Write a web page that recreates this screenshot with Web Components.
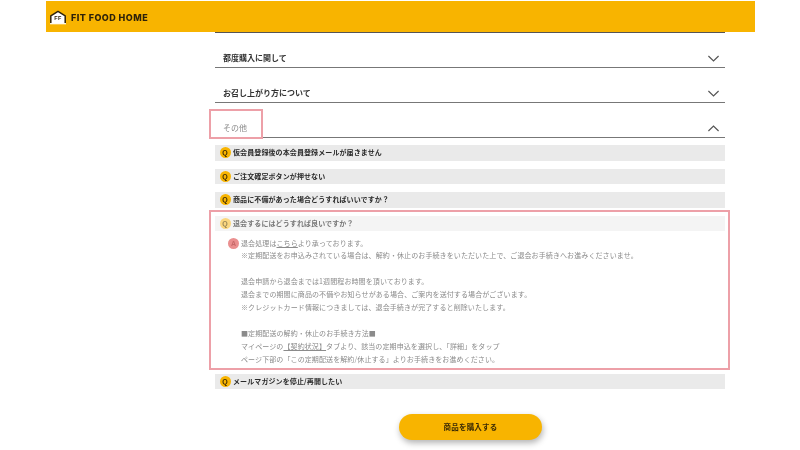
<!DOCTYPE html>
<html lang="ja"><head><meta charset="utf-8"><title>FAQ</title>
<style>
html,body{margin:0;padding:0;background:#fff}
body{width:800px;height:450px;overflow:hidden;font-family:"Noto Sans CJK JP","Noto Sans",sans-serif;color:#333;filter:blur(.3px)}
</style></head><body>
<ff-header></ff-header>
<ff-main>
  <ff-section title-text="都度購入に関して"></ff-section>
  <ff-section title-text="お召し上がり方について"></ff-section>
  <ff-section title-text="その他" open marked>
    <ff-q>仮会員登録後の本会員登録メールが届きません</ff-q>
    <ff-q>ご注文確定ボタンが押せない</ff-q>
    <ff-q>商品に不備があった場合どうすればいいですか？</ff-q>
    <ff-answer q="退会するにはどうすれば良いですか？">
      <p>退会処理は<u>こちら</u>より承っております。<br>※定期配送をお申込みされている場合は、解約・休止のお手続きをいただいた上で、ご退会お手続きへお進みくださいませ。</p>
      <p>退会申請から退会までは1週間程お時間を頂いております。<br>退会までの期間に商品の不備やお知らせがある場合、ご案内を送付する場合がございます。<br>※クレジットカード情報につきましては、退会手続きが完了すると削除いたします。</p>
      <p>■定期配送の解約・休止のお手続き方法■<br>マイページの<u>【契約状況】</u>タブより、該当の定期申込を選択し、「詳細」をタップ<br>ページ下部の「この定期配送を解約/休止する」よりお手続きをお進めください。</p>
    </ff-answer>
    <ff-q>メールマガジンを停止/再開したい</ff-q>
  </ff-section>
  <ff-button>商品を購入する</ff-button>
</ff-main>
<script>
function def(name,html,init){customElements.define(name,class extends HTMLElement{
  constructor(){super();const r=this.attachShadow({mode:"open"});r.innerHTML=html;if(init)init(this,r);}
  connectedCallback(){if(this._c)this._c();}
});}
def("ff-header",`<style>
:host{display:flex;align-items:center;gap:4px;box-sizing:border-box;width:709px;height:31px;margin:1px 0 0 46px;padding:2px 0 0 3px;background:#f8b400;color:#2e2209;font:800 9px "Inter","Liberation Sans",sans-serif;letter-spacing:.45px}
svg{display:block}
</style>
<svg width="18" height="15" viewBox="0 0 18 15"><path d="M1.8 13.4V5.8L9 1.4l7.2 4.4v7.6" fill="#fff" stroke="#2e2209" stroke-width="1.5" stroke-linejoin="round"/><path d="M1 13.7h16" stroke="#fff" stroke-width="1.2"/><text x="9" y="10.4" text-anchor="middle" font-family="Liberation Sans" font-weight="700" font-size="5.5" fill="#2e2209">FF</text></svg>
<span>FIT FOOD HOME</span>`);
def("ff-main",`<style>
:host{display:block;width:510px;margin-left:215px;border-top:1px solid #555}
</style><slot></slot>`);
const chev=d=>`<svg width="11" height="7" viewBox="0 0 11 7"><path d="${d}" fill="none" stroke="#555" stroke-width="1.2"/></svg>`;
def("ff-section",`<style>
:host{display:block;position:relative}
.h{display:flex;align-items:center;justify-content:space-between;box-sizing:border-box;height:35px;padding:17px 6px 1px 8px;border-bottom:1px solid #777;font-size:8px;font-weight:700;color:#333;line-height:16px}
:host([marked]) .h{font-weight:400;color:#8a8a8a}
#c{padding-top:1px}
.box{position:absolute;left:-6px;top:6px;width:54px;height:30px;box-sizing:border-box;border:2.5px solid #eda0a8;display:none}
:host([marked]) .box{display:block}
.b{display:none;padding-top:7px}
:host([open]) .b{display:block}
svg{display:block}
</style><div class="h"><span id="t"></span><span id="c"></span></div><div class="box"></div><div class="b"><slot></slot></div>`,(e,r)=>{e._c=()=>{r.getElementById("t").textContent=e.getAttribute("title-text");
r.getElementById("c").innerHTML=chev(e.hasAttribute("open")?"M.4 6L5.5 1 10.6 6":"M.4 1L5.5 6 10.6 1");};});
const qstyle=`.q{display:flex;align-items:center;gap:2.5px;height:15.5px;background:#eaeaea;padding-left:4.5px;font-size:7px;font-weight:700;color:#2a2a2a;line-height:15.5px;letter-spacing:.1px}
.i{width:11px;height:11px;border-radius:50%;background:#f8b400;color:#3a2a05;font:700 7px/11px "Liberation Sans",sans-serif;letter-spacing:0;text-align:center;flex:none}`;
def("ff-q",`<style>:host{display:block;margin-bottom:8px}${qstyle}</style><div class="q"><span class="i">Q</span><span><slot></slot></span></div>`);
def("ff-answer",`<style>
:host{display:block;position:relative;margin-bottom:8px}
${qstyle}
.q{background:#f4f4f4;color:#777}
.i{background:#fbd77f;color:#9a8756}
.a{position:relative;padding:5.5px 0 0 26px;font-size:7px;line-height:12.9px;color:#8b8b8b;letter-spacing:.1px}
.a-i{position:absolute;left:13px;top:6.5px;width:11px;height:11px;border-radius:50%;background:#ea8f8f;color:#c86a6a;font:700 7px/11px "Liberation Sans",sans-serif;letter-spacing:0;text-align:center}
::slotted(p){margin:0 0 12.9px}
::slotted(p:last-child){margin:0}
.box{position:absolute;left:-6.5px;top:-5.5px;right:-5px;bottom:-4.5px;border:2.5px solid #eda0a8;pointer-events:none}
</style><div class="q"><span class="i">Q</span><span id="t"></span></div><div class="a"><span class="a-i">A</span><slot></slot></div><div class="box"></div>`,(e,r)=>{e._c=()=>{r.getElementById("t").textContent=e.getAttribute("q");};});
def("ff-button",`<style>
:host{display:block;width:143px;height:25.5px;margin:25px 0 0 184px;border-radius:13px;background:#f8b400;box-shadow:1px 3px 6px rgba(0,0,0,.3);text-align:center;font-size:7.5px;font-weight:700;line-height:25.5px;color:#3a2a05;letter-spacing:.2px}
</style><slot></slot>`);
</script>
</body></html>
